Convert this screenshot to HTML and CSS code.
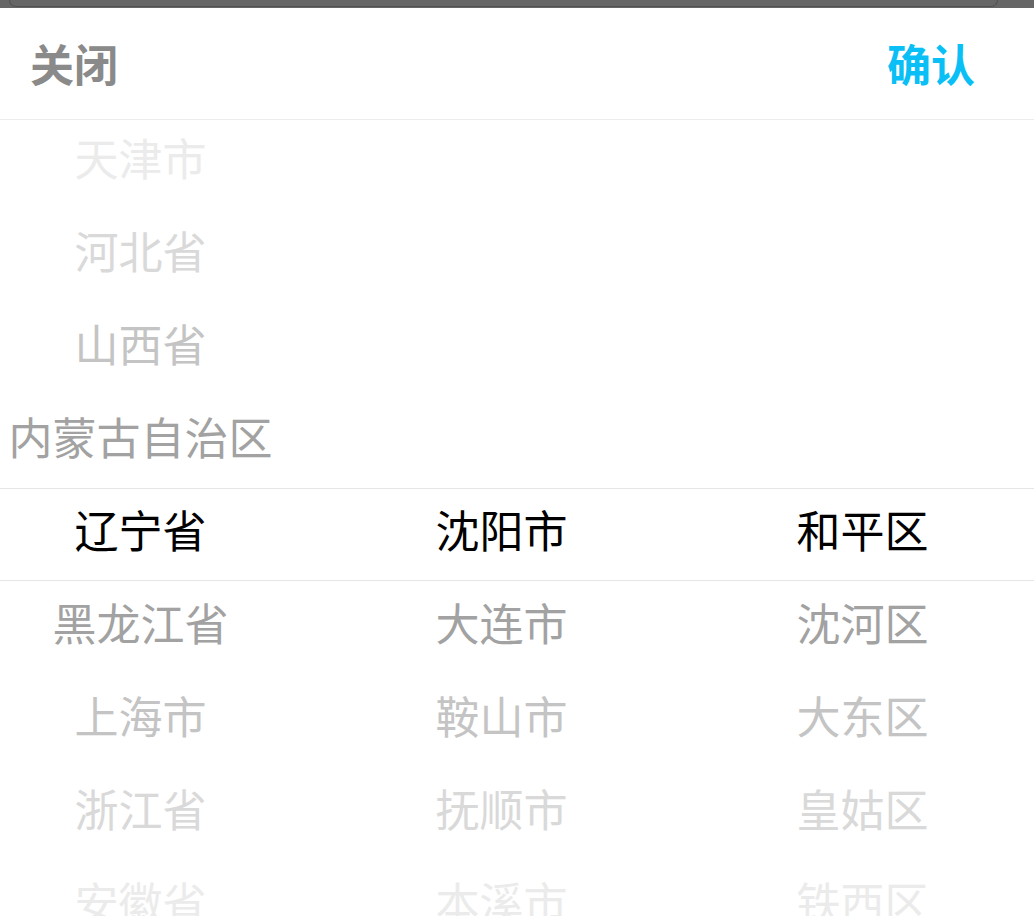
FILE: index.html
```html
<!DOCTYPE html>
<html lang="zh-CN">
<head>
<meta charset="utf-8">
<title>地区选择</title>
<link rel="stylesheet" href="styles.css">
</head>
<body>
<div class="topbar"><div class="topbar-frame"></div></div>
<div class="sheet">
  <div class="header">
    <span class="btn btn-close">关闭</span>
    <span class="btn btn-ok">确认</span>
  </div>
  <div class="picker">
    <div class="col">
      <div class="item f4">天津市</div>
      <div class="item f3">河北省</div>
      <div class="item f2">山西省</div>
      <div class="item f1">内蒙古自治区</div>
      <div class="item sel">辽宁省</div>
      <div class="item f1">黑龙江省</div>
      <div class="item f2">上海市</div>
      <div class="item f3">浙江省</div>
      <div class="item f4">安徽省</div>
    </div>
    <div class="col">
      <div class="item"></div>
      <div class="item"></div>
      <div class="item"></div>
      <div class="item"></div>
      <div class="item sel">沈阳市</div>
      <div class="item f1">大连市</div>
      <div class="item f2">鞍山市</div>
      <div class="item f3">抚顺市</div>
      <div class="item f4">本溪市</div>
    </div>
    <div class="col">
      <div class="item"></div>
      <div class="item"></div>
      <div class="item"></div>
      <div class="item"></div>
      <div class="item sel">和平区</div>
      <div class="item f1">沈河区</div>
      <div class="item f2">大东区</div>
      <div class="item f3">皇姑区</div>
      <div class="item f4">铁西区</div>
    </div>
  </div>
</div>
</body>
</html>
```
FILE: styles.css
```css
html, body {
  margin: 0;
  padding: 0;
  background: #ffffff;
  height: 100%;
  overflow: hidden;
}
body {
  font-family: "Noto Sans CJK SC", "Noto Sans", sans-serif;
}
.topbar {
  height: 8px;
  background: #666666;
  overflow: hidden;
}
.topbar-frame {
  height: 7px;
  margin: 0 36px 0 9px;
  border: 1px solid #525252;
  border-top: none;
  border-radius: 0 0 12px 12px;
  box-sizing: border-box;
}
.sheet {
  display: flex;
  flex-direction: column;
  overflow: hidden;
}
.header {
  height: 112px;
  box-sizing: border-box;
  border-bottom: 1px solid #ececec;
  display: flex;
  align-items: center;
  justify-content: space-between;
  padding: 0 59px 0 30px;
}
.btn {
  font-size: 44px;
  font-weight: bold;
  line-height: 1;
  position: relative;
  top: -1px;
}
.btn-close { color: #8a8a8a; }
.btn-ok { color: #09bff5; }
.picker {
  height: 796px;
  overflow: hidden;
  display: flex;
  margin-left: -40px;
  width: 1083px;
}
.col {
  flex: 0 0 361px;
  display: flex;
  flex-direction: column;
  margin-top: -4px;
}
.item {
  height: 93px;
  flex: 0 0 93px;
  display: flex;
  align-items: center;
  justify-content: center;
  font-size: 44px;
  line-height: 1;
  white-space: nowrap;
  box-sizing: border-box;
  padding-bottom: 11px;
}
.sel {
  color: #000000;
  border-top: 1px solid #e6e6e6;
  border-bottom: 1px solid #e6e6e6;
}
.f1 { color: #a2a2a2; }
.f2 { color: #c4c4c4; }
.f3 { color: #d9d9d9; }
.f4 { color: #ebebeb; }
```
